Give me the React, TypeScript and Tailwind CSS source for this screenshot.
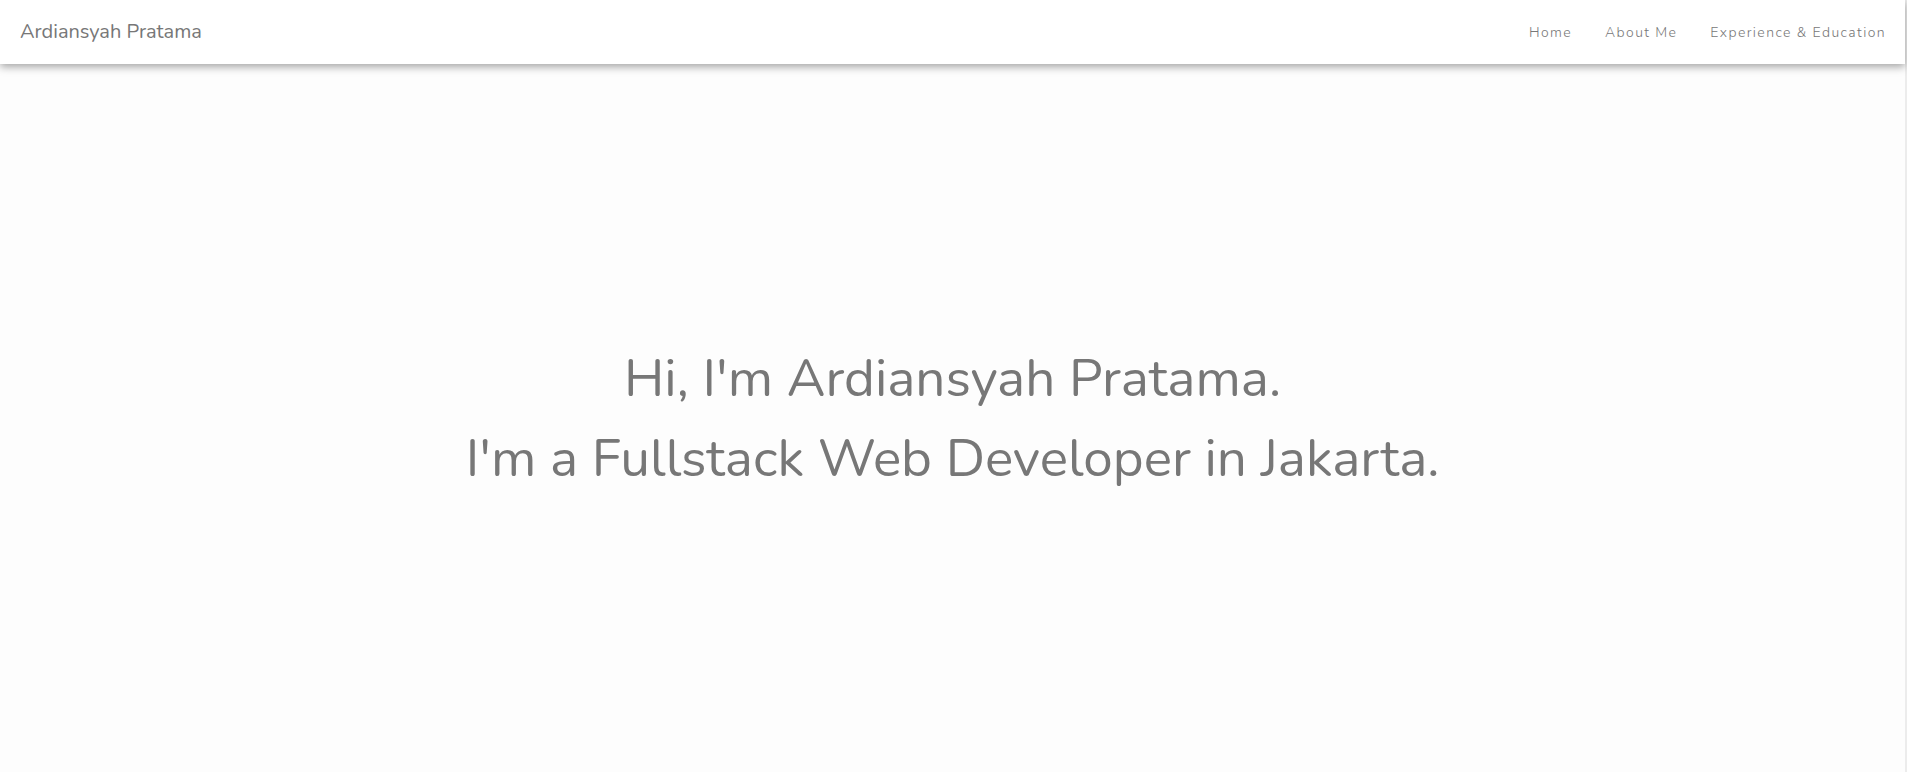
export default function App() {
  const links = ["Home", "About Me", "Experience & Education"];

  return (
    <div
      className="flex min-h-screen w-full bg-[#fdfdfd] text-[#777777]"
      style={{ fontFamily: "Nunito, Lato, 'Noto Sans', sans-serif" }}
    >
      <div className="flex min-h-screen flex-1 flex-col">
        <nav className="relative z-10 flex h-[64px] items-center justify-between bg-white pl-[20px] pr-[19px] shadow-[0_3px_8px_rgba(0,0,0,0.35)]">
          <a className="text-[20px] text-[#777777]">Ardiansyah Pratama</a>
          <ul className="flex items-center gap-[33px]">
            {links.map((l) => (
              <li key={l} className="text-[14px] font-light tracking-[1.4px] text-[#777777]">
                {l}
              </li>
            ))}
          </ul>
        </nav>

        <main className="flex flex-1 flex-col items-center justify-center pt-[2px]">
          <h1 className="text-center text-[53px] font-normal leading-[80px] text-[#777777]">
            Hi, I'm Ardiansyah Pratama.
            <br />
            I'm a Fullstack Web Developer in Jakarta.
          </h1>
        </main>
      </div>
      <div className="w-[2px] bg-[#ececec]" />
    </div>
  );
}
